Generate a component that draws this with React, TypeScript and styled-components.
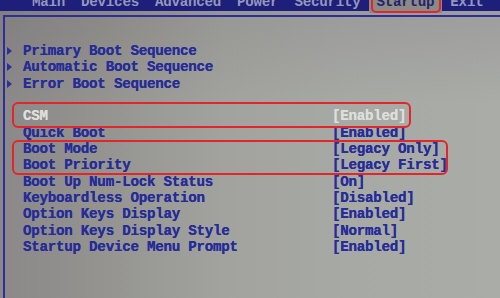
import React from "react";
import styled, { createGlobalStyle } from "styled-components";

const Global = createGlobalStyle`
  html, body { margin: 0; padding: 0; }
  body {
    width: 500px;
    height: 298px;
    overflow: hidden;
    font-family: "Liberation Mono", "DejaVu Sans Mono", monospace;
  }
`;

const Screen = styled.div`
  width: 500px;
  height: 298px;
  overflow: hidden;
  display: flex;
  flex-direction: column;
  background:
    linear-gradient(180deg, rgba(60, 50, 60, 0.12) 0%, rgba(0, 0, 0, 0) 35%),
    linear-gradient(90deg, #8b8889 0%, #94938f 20%, #a2a39f 45%, #a7a9a5 70%, #aaaca8 100%);
  font-family: "Liberation Mono", "DejaVu Sans Mono", monospace;
  font-weight: bold;
  font-size: 14.2px;
  letter-spacing: -0.25px;
`;

const TabBar = styled.div`
  height: 11px;
  flex: none;
  display: flex;
  padding-left: 24px;
  background: #1d1f7a;
`;

const Tab = styled.div<{ $active?: boolean }>`
  position: relative;
  padding: 0 8px;
  height: ${(p) => (p.$active ? "13px" : "11px")};
  line-height: 16px;
  background: ${(p) => (p.$active ? "#8d8985" : "transparent")};
  color: ${(p) => (p.$active ? "#23246e" : "#9597bb")};
  white-space: nowrap;
  &::after {
    content: "";
    display: ${(p) => (p.$active ? "block" : "none")};
    position: absolute;
    left: 2px;
    right: 1px;
    top: -4px;
    bottom: 0;
    border: 2px solid #e3262a;
    border-radius: 5px;
    pointer-events: none;
  }
`;

const TabLabel = styled.span`
  display: block;
  margin-top: -6px;
`;

const Frame = styled.div`
  flex: 1;
  margin: 4px 0 0 3px;
  border-top: 2px solid #2c2f9a;
  border-left: 2px solid #2c2f9a;
  padding: 26px 0 0 2px;
`;

const Row = styled.div<{ $selected?: boolean }>`
  display: grid;
  grid-template-columns: 16px 309px auto;
  align-items: center;
  height: 16.33px;
  line-height: 16.33px;
  color: ${(p) => (p.$selected ? "#dedfdb" : "#262c98")};
  text-shadow: 0 0 0.4px currentColor;
  white-space: nowrap;
`;

const Marker = styled.span`
  width: 0;
  height: 0;
  border-left: 5px solid #2b3196;
  border-top: 4px solid transparent;
  border-bottom: 4px solid transparent;
`;

const Label = styled.span``;
const Value = styled.span``;

const Spacer = styled.div`
  height: 16.33px;
`;

const Highlight = styled.div<{ $width: number; $top: number; $bottom: number }>`
  position: relative;
  &::after {
    content: "";
    position: absolute;
    left: 5px;
    width: ${(p) => p.$width}px;
    top: ${(p) => p.$top}px;
    bottom: ${(p) => p.$bottom}px;
    border: 2px solid #e3262a;
    border-radius: 6px;
    box-sizing: border-box;
    pointer-events: none;
  }
`;

const tabs = ["Main", "Devices", "Advanced", "Power", "Security", "Startup", "Exit"];

type Item = { label: string; value?: string; sub?: boolean; selected?: boolean };

const Line = ({ label, value, sub, selected }: Item) => (
  <Row $selected={selected}>
    {sub ? <Marker /> : <span />}
    <Label>{label}</Label>
    <Value>{value}</Value>
  </Row>
);

export default function App() {
  return (
    <Screen>
      <Global />
      <TabBar>
        {tabs.map((t) => (
          <Tab key={t} $active={t === "Startup"}>
            <TabLabel>{t}</TabLabel>
          </Tab>
        ))}
      </TabBar>
      <Frame>
        <Line sub label="Primary Boot Sequence" />
        <Line sub label="Automatic Boot Sequence" />
        <Line sub label="Error Boot Sequence" />
        <Spacer />
        <Highlight $width={399} $top={-6} $bottom={-3}>
          <Line selected label="CSM" value="[Enabled]" />
        </Highlight>
        <Line label="Quick Boot" value="[Enabled]" />
        <Highlight $width={436} $top={-1} $bottom={-1}>
          <Line label="Boot Mode" value="[Legacy Only]" />
          <Line label="Boot Priority" value="[Legacy First]" />
        </Highlight>
        <Line label="Boot Up Num-Lock Status" value="[On]" />
        <Line label="Keyboardless Operation" value="[Disabled]" />
        <Line label="Option Keys Display" value="[Enabled]" />
        <Line label="Option Keys Display Style" value="[Normal]" />
        <Line label="Startup Device Menu Prompt" value="[Enabled]" />
      </Frame>
    </Screen>
  );
}
